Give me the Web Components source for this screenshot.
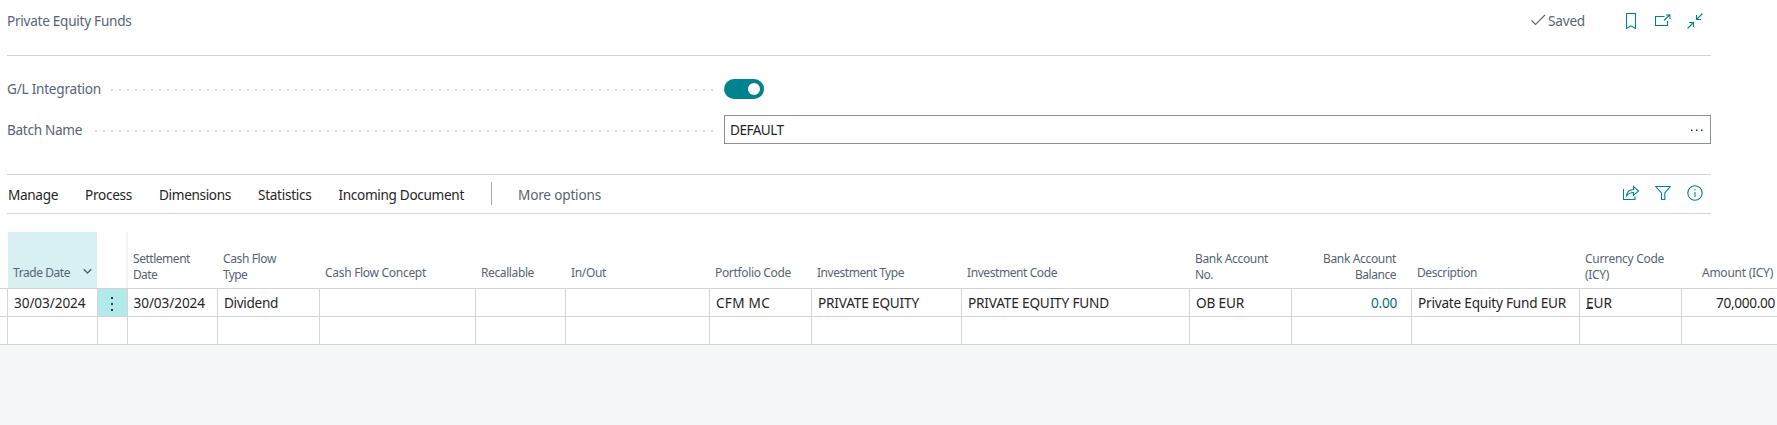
<!DOCTYPE html>
<html lang="en"><head><meta charset="utf-8"><title>Private Equity Funds</title>
<style>
html,body{margin:0;background:#fff;font-family:"Noto Sans","Open Sans",sans-serif;font-size:13.6px;color:#262626}
body{height:425px;overflow:hidden}
</style></head><body>
<fund-page></fund-page>
<script>
const define=(name,html,init)=>customElements.define(name,class extends HTMLElement{
  connectedCallback(){
    if(this.shadowRoot)return;
    const t=document.createElement('template');t.innerHTML=html;
    this.attachShadow({mode:'open'}).append(t.content.cloneNode(true));
    if(init)init.call(this);
  }
});

// A single line of text, tracked so that it occupies the width given in "w".
define('fit-text','<style>:host{display:block;white-space:nowrap}span{display:inline-block}</style><span><slot></slot></span>',function(){
  const s=this.shadowRoot.querySelector('span'),w=+this.getAttribute('w'),n=this.textContent.length;
  const d=(w-s.getBoundingClientRect().width)/n;
  s.style.letterSpacing=d.toFixed(3)+'px';
});

const icons={
 check:'<path d="M.5 7.500 4.500 11.500 14 2"/>',
 bookmark:'<path d="M3.500.5h9v15L8 12.800l-4.500 2.700z"/>',
 popout:'<path d="M9.500 3.500H.5v9h12V8M9 7.500 15 1.500M11 2h4v4"/>',
 collapse:'<path d="M15.500.5 9.500 6.500M9.500 2v4.500H14M.5 15.500l6-6M2 9.500h4.500V14"/>',
 share:'<path d="M.5 4v10.500h11.500V11.500M3.500 11c.5-4.500 3-6.500 7-6.500V1.500l5 4.500-5 4.300V7.500c-3 0-5 1-7 3.500z"/>',
 filter:'<path d="M.7 1.500h14.600L9.800 8v6.500H6.500V8z"/>',
 info:'<circle cx="8" cy="8" r="7.200"/><path d="M8 7v5M8 4v1.300"/>'
};
define('line-icon','<style>:host{display:block;width:16px;height:16px}svg{display:block;fill:none;stroke:currentColor;stroke-width:1.100}</style><svg width="16" height="16" viewBox="0 0 16 16"></svg>',function(){
  this.shadowRoot.querySelector('svg').innerHTML=icons[this.getAttribute('name')];
});

define('page-header',`<style>
:host{display:flex;box-sizing:border-box;height:56px;margin-left:7px;width:1704px;border-bottom:1px solid #d2d4d7;color:#586474;line-height:20px;padding-top:11px}
.actions{margin-left:auto;display:flex;align-items:flex-start;color:#00838f}
.saved{display:flex;color:#586474;margin-right:38px}
.saved line-icon{margin-top:2px;width:17px}
.actions>line-icon{margin:2px 16px 0 0}.actions>line-icon:last-child{margin-right:8px}
</style><fit-text w="124.5">Private Equity Funds</fit-text><div class="actions"><div class="saved"><line-icon name="check"></line-icon><fit-text w="37">Saved</fit-text></div><line-icon name="bookmark"></line-icon><line-icon name="popout"></line-icon><line-icon name="collapse"></line-icon></div>`);

define('form-row',`<style>
:host{display:flex;height:41px;align-items:center;margin-left:7px;width:1704px}
.label{display:flex;align-items:center;width:717px;color:#586474;line-height:20px}
.dots{flex:1;height:2px;margin:3px 11px 0 10px;background:repeating-linear-gradient(to left,#d8d9db 0 2px,transparent 2px 8px)}
.value{flex:1;display:flex}
</style><div class="label"><slot name="label"></slot><span class="dots"></span></div><div class="value"><slot></slot></div>`);

define('toggle-switch',`<style>:host{display:flex;box-sizing:border-box;width:40px;height:20px;border-radius:10px;background:#00838f;padding:4px;justify-content:flex-end;margin-top:1px}
i{width:12px;height:12px;border-radius:50%;background:#fff}</style><i></i>`);

define('lookup-field',`<style>:host{display:flex;flex:1;box-sizing:border-box;height:29px;border:1px solid #8a919e;align-items:center;padding:0 7px 0 5px;line-height:20px}
svg{margin-left:auto}</style><slot></slot><svg width="12" height="4" viewBox="0 0 12 4" fill="#2b3440"><path d="M0 1.500h1.500V3H0zM5 1.500h1.500V3H5zM10 1.500h1.500V3H10z"/></svg>`);

define('action-bar',`<style>
:host{display:flex;box-sizing:border-box;margin:24px 0 0 7px;width:1704px;height:40px;border:1px solid #d2d4d7;border-width:1px 0;align-items:center;line-height:20px}
.menu{display:flex;align-items:center;gap:27px;padding-left:1px;margin-top:1px}
.sep{width:1px;height:23px;background:#a3a9b2;margin-top:-2px;}
.more{color:#586474;margin-left:-1px}
.tools{margin-left:auto;display:flex;gap:16px;padding-right:8px;color:#00838f;margin-top:-2px}
</style><div class="menu"><fit-text w="50">Manage</fit-text><fit-text w="47">Process</fit-text><fit-text w="72">Dimensions</fit-text><fit-text w="53.5">Statistics</fit-text><fit-text w="125.5">Incoming Document</fit-text><span class="sep"></span><fit-text class="more" w="83">More options</fit-text></div>
<div class="tools"><line-icon name="share"></line-icon><line-icon name="filter"></line-icon><line-icon name="info"></line-icon></div>`);

// Columns: width, header lines [text, width], value [text, width], options.
const columns=[
 [90,[['Trade Date',57]],['30/03/2024',71.5],'sorted'],
 [30,[],null,'menu'],
 [90,[['Settlement',57],['Date',24]],['30/03/2024',71.5],'frozen'],
 [102,[['Cash Flow',53],['Type',24]],['Dividend',54]],
 [156,[['Cash Flow Concept',101]]],
 [90,[['Recallable',53]]],
 [144,[['In/Out',35]]],
 [102,[['Portfolio Code',76]],['CFM MC',54]],
 [150,[['Investment Type',87]],['PRIVATE EQUITY',101]],
 [228,[['Investment Code',90]],['PRIVATE EQUITY FUND',141]],
 [102,[['Bank Account',73],['No.',18]],['OB EUR',48]],
 [120,[['Bank Account',73],['Balance',41]],['0.00',26],'right teal'],
 [168,[['Description',60]],['Private Equity Fund EUR',148]],
 [102,[['Currency Code',79],['(ICY)',24]],['EUR',26],'lookup'],
 [96,[['Amount (ICY)',71]],['70,000.00',59],'right last']
];
const fit=([t,w])=>`<fit-text w="${w}">${t}</fit-text>`;

define('grid-head',`<style>
:host{display:flex;box-sizing:border-box;flex-direction:column;justify-content:flex-end;height:56px;padding:0 15px 5px 6px;font-size:12px;line-height:16px;color:#586474}
:host(.one){padding-bottom:7px}
:host(.sorted){background:#d8f0f2;margin-left:1px;padding-left:5px;}
.line{display:flex;align-items:center}
svg{display:none}
:host(.sorted) svg{display:block;margin-left:auto;margin-right:-10px;margin-top:-3px}
:host(.frozen){border-left:2px solid #f3f4f6;margin-left:-1px;padding-left:5px}
:host(.right){align-items:flex-end}:host(.last){padding-right:4px}
</style><div class="line"><slot></slot><svg width="9" height="7" viewBox="0 0 9 7" fill="none" stroke="#505c6d" stroke-width="1.300"><path d="M.7 1.200 4.500 5 8.300 1.200"/></svg></div><slot name="second"></slot>`);

define('grid-cell',`<style>
:host{display:flex;box-sizing:border-box;height:28px;border-left:1px solid #d2d4d7;border-bottom:1px solid #d2d4d7;align-items:center;padding:1px 14px 0 6px;line-height:20px}
:host(.right){justify-content:flex-end}:host(.last){padding-right:2px}:host(.teal){color:#006d77}
:host(.frozen){padding-left:5.5px}
:host(.menu){background:#b2eaec;padding:3px 1px 0 0;justify-content:center;}
</style><slot></slot>`);

define('lines-grid',`<style>
:host{display:block;margin-top:18px}
.grid{display:grid;width:1777px;grid-template-columns:7px ${columns.map(c=>c[0]+'px').join(' ')};overflow:hidden}
.stub{height:28px;box-sizing:border-box;border-bottom:1px solid #d2d4d7}
.stub.top{height:57px}
.h{border-bottom:1px solid #d2d4d7}
.code{display:flex}
.code i{position:relative;width:0}
.code i::after{content:"";position:absolute;left:0;bottom:4px;width:7px;border-bottom:1px solid #333}
</style><div class="grid"></div>`,function(){
  const one='<div class="stub"></div>';
  let html='<div class="stub top"></div>';
  for(const [w,h,v,c=''] of columns){
    html+=`<div class="h"><grid-head class="${c} ${h.length===1?'one':''}">${h[0]?fit(h[0]):''}${h[1]?`<fit-text slot="second" w="${h[1][1]}">${h[1][0]}</fit-text>`:''}</grid-head></div>`;
  }
  html+=one;
  for(const [w,h,v,c=''] of columns){
    const body=c==='menu'?'<svg width="4" height="16" viewBox="0 0 4 16" fill="#26343b"><path d="M1 1h2v2H1zM1 7h2v2H1zM1 13h2v2H1z"/></svg>':c==='lookup'?`<span class="code"><i></i>${fit(v)}</span>`:v?fit(v):'';
    html+=`<grid-cell class="${c}">${body}</grid-cell>`;
  }
  html+=one+columns.map(()=>'<grid-cell></grid-cell>').join('');
  this.shadowRoot.querySelector('.grid').innerHTML=html;
});

define('fund-page',`<style>:host{display:flex;flex-direction:column;height:425px}.form{padding-top:12px}.rest{flex:1;background:#f5f6f8}</style>
<page-header></page-header>
<div class="form"><form-row><fit-text slot="label" w="94">G/L Integration</fit-text><toggle-switch></toggle-switch></form-row>
<form-row><fit-text slot="label" w="75">Batch Name</fit-text><lookup-field><fit-text w="53.5">DEFAULT</fit-text></lookup-field></form-row></div>
<action-bar></action-bar><lines-grid></lines-grid><div class="rest"></div>`);
</script></body></html>
